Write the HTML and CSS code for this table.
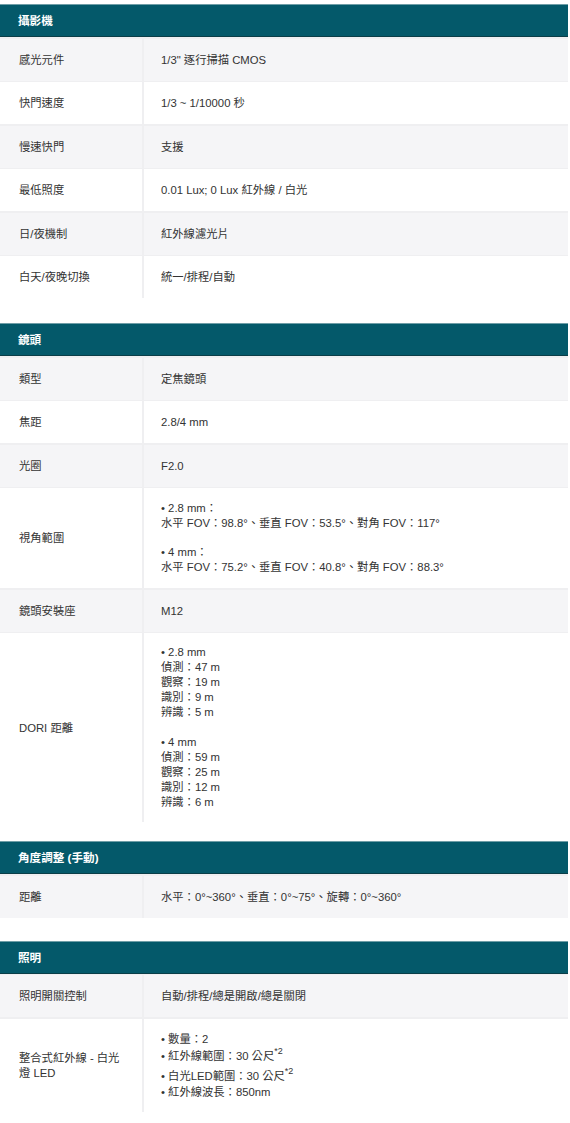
FILE: index.html
```html
<!DOCTYPE html>
<html lang="zh-Hant">
<head>
<meta charset="utf-8">
<title>規格</title>
<link rel="stylesheet" href="styles.css">
</head>
<body>
<div class="page">
  <section class="spec">
    <div class="spec-head">攝影機</div>
    <div class="row alt"><div class="label">感光元件</div><div class="value">1/3" 逐行掃描 CMOS</div></div>
    <div class="row"><div class="label">快門速度</div><div class="value">1/3 ~ 1/10000 秒</div></div>
    <div class="row alt"><div class="label">慢速快門</div><div class="value">支援</div></div>
    <div class="row"><div class="label">最低照度</div><div class="value">0.01 Lux; 0 Lux 紅外線 / 白光</div></div>
    <div class="row alt"><div class="label">日/夜機制</div><div class="value">紅外線濾光片</div></div>
    <div class="row"><div class="label">白天/夜晚切換</div><div class="value">統一/排程/自動</div></div>
  </section>

  <section class="spec spec-lens">
    <div class="spec-head">鏡頭</div>
    <div class="row alt"><div class="label">類型</div><div class="value">定焦鏡頭</div></div>
    <div class="row"><div class="label">焦距</div><div class="value">2.8/4 mm</div></div>
    <div class="row alt"><div class="label">光圈</div><div class="value">F2.0</div></div>
    <div class="row"><div class="label">視角範圍</div><div class="value multi fov">
      <p>• 2.8 mm：<br>水平 FOV：98.8°、垂直 FOV：53.5°、對角 FOV：117°</p>
      <p>• 4 mm：<br>水平 FOV：75.2°、垂直 FOV：40.8°、對角 FOV：88.3°</p>
    </div></div>
    <div class="row alt"><div class="label">鏡頭安裝座</div><div class="value">M12</div></div>
    <div class="row"><div class="label">DORI 距離</div><div class="value multi dori">
      <p>• 2.8 mm<br>偵測：47 m<br>觀察：19 m<br>識別：9 m<br>辨識：5 m</p>
      <p>• 4 mm<br>偵測：59 m<br>觀察：25 m<br>識別：12 m<br>辨識：6 m</p>
    </div></div>
  </section>

  <section class="spec spec-angle">
    <div class="spec-head">角度調整 (手動)</div>
    <div class="row alt"><div class="label">距離</div><div class="value">水平：0°~360°、垂直：0°~75°、旋轉：0°~360°</div></div>
  </section>

  <section class="spec spec-light">
    <div class="spec-head">照明</div>
    <div class="row alt"><div class="label">照明開關控制</div><div class="value">自動/排程/總是開啟/總是關閉</div></div>
    <div class="row"><div class="label">整合式紅外線 - 白光燈 LED</div><div class="value multi led">
      <ul>
        <li>• 數量：2</li>
        <li class="has-sup">• 紅外線範圍：30 公尺<sup>*2</sup></li>
        <li class="has-sup tall">• 白光LED範圍：30 公尺<sup>*2</sup></li>
        <li>• 紅外線波長：850nm</li>
      </ul>
    </div></div>
  </section>
</div>
</body>
</html>
```

FILE: styles.css
```css
* { box-sizing: border-box; }

html, body {
  margin: 0;
  padding: 0;
  background: #ffffff;
}

body {
  font-family: "Liberation Sans", Arial, "Noto Sans CJK TC", sans-serif;
  font-size: 11.3px;
  color: #333333;
}

.page {
  width: 568px;
  padding-top: 4px;
  display: flex;
  flex-direction: column;
}

.spec {
  display: flex;
  flex-direction: column;
  gap: 1.5px;
  background: #efeff1;
}

.spec-lens { margin-top: 25px; }
.spec-angle { margin-top: 19px; }
.spec-light { margin-top: 23px; }

.spec-head {
  height: 33px;
  background: #04596a;
  border-top: 1px solid #6f9ea7;
  border-bottom: 1px solid #0a3e48;
  color: #ffffff;
  font-weight: bold;
  font-size: 11.6px;
  line-height: 31px;
  padding-left: 18px;
}

.row {
  display: flex;
  gap: 2px;
  min-height: 42px;
}

.label,
.value {
  display: flex;
  align-items: center;
  background: #ffffff;
  line-height: 15px;
  padding-top: 1px;
}

.row.alt .label,
.row.alt .value {
  background: #f5f5f7;
}

.label {
  width: 142px;
  flex: none;
  padding-left: 19px;
  padding-right: 19px;
}

.value {
  flex: 1;
  padding-left: 17px;
  padding-right: 17px;
}

.multi {
  flex-direction: column;
  align-items: flex-start;
  justify-content: center;
  padding-top: 13px;
  padding-bottom: 13px;
}

.multi p {
  margin: 0;
}

.fov p + p {
  margin-top: 14px;
}

.dori {
  padding-top: 12px;
  padding-bottom: 12px;
}

.dori p + p {
  margin-top: 15px;
}

.led {
  padding-top: 12px;
  padding-bottom: 12px;
}

.led ul {
  list-style: none;
  margin: 0;
  padding: 0;
}

.led li {
  line-height: 16px;
}

.led li.has-sup {
  padding-top: 1px;
}

.led li.tall {
  padding-top: 4px;
}

.led sup {
  font-size: 9px;
  line-height: 0;
  position: relative;
  top: -1px;
}
```
